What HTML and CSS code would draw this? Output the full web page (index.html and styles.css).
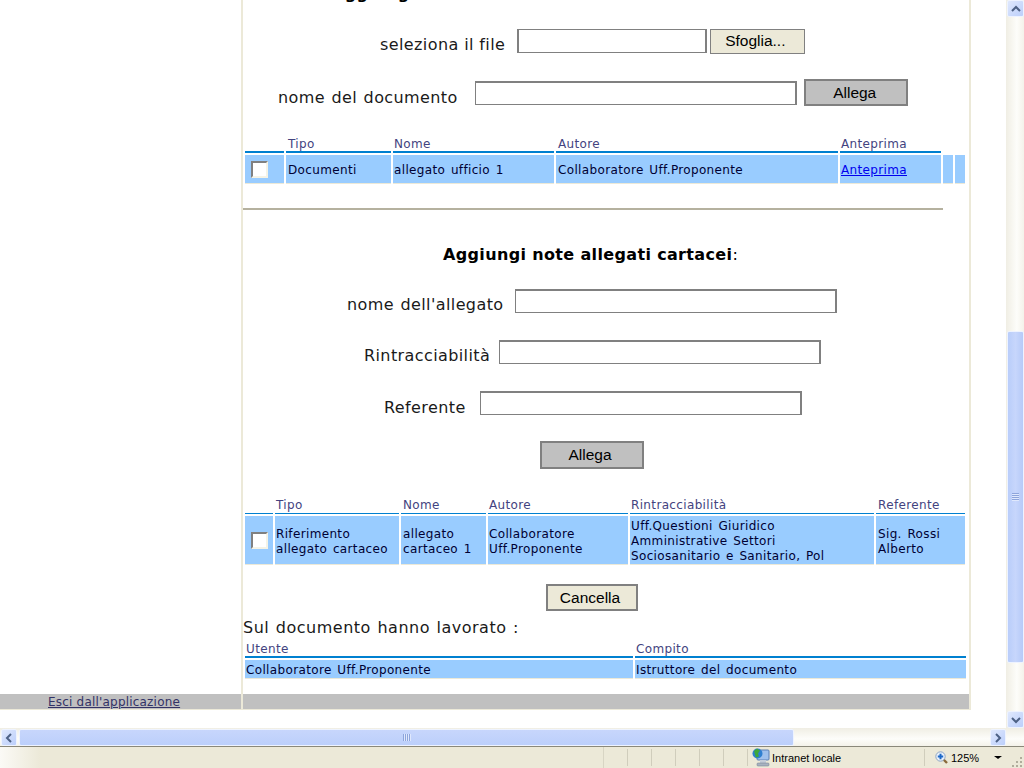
FILE: index.html
```html
<!DOCTYPE html>
<html lang="it">
<head>
  <meta charset="UTF-8" />
  <title>Documento</title>
  <link rel="stylesheet" href="styles.css">
</head>
<body>
  <div class="view">
    <div class="page">
      <div class="columns">
        <div class="sidebar"></div>
        <div class="main">
          <h2 class="title title-cut">Aggiungi documenti:</h2>

          <div class="row row-file">
            <label>seleziona il file</label>
            <input type="text" class="field field-file">
            <button class="btn btn-browse">Sfoglia...</button>
          </div>
          <div class="row row-docname">
            <label>nome del documento</label>
            <input type="text" class="field field-wide">
            <button class="btn btn-attach btn-attach-top">Allega</button>
          </div>

          <table class="grid grid-docs">
            <colgroup>
              <col style="width:39px"><col style="width:105px"><col style="width:161px"><col style="width:282px"><col style="width:101px"><col style="width:10px"><col style="width:10px">
            </colgroup>
            <tr>
              <th></th><th>Tipo</th><th>Nome</th><th>Autore</th><th>Anteprima</th><th class="no-line"></th><th class="no-line"></th>
            </tr>
            <tr>
              <td class="check"><input type="checkbox"></td>
              <td>Documenti</td>
              <td>allegato ufficio 1</td>
              <td>Collaboratore Uff.Proponente</td>
              <td><a href="#">Anteprima</a></td>
              <td></td>
              <td></td>
            </tr>
          </table>

          <hr class="divider">

          <h2 class="title title-notes">Aggiungi note allegati cartacei<span>:</span></h2>

          <div class="row row-note1">
            <label>nome dell'allegato</label>
            <input type="text" class="field field-wide">
          </div>
          <div class="row row-note2">
            <label>Rintracciabilità</label>
            <input type="text" class="field field-wide">
          </div>
          <div class="row row-note3">
            <label>Referente</label>
            <input type="text" class="field field-wide">
          </div>
          <div class="row row-submit">
            <button class="btn btn-attach">Allega</button>
          </div>

          <table class="grid grid-notes">
            <colgroup>
              <col style="width:28px"><col style="width:124px"><col style="width:85px"><col style="width:140px"><col style="width:244px"><col style="width:89px">
            </colgroup>
            <tr>
              <th></th><th>Tipo</th><th>Nome</th><th>Autore</th><th>Rintracciabilità</th><th>Referente</th>
            </tr>
            <tr>
              <td class="check"><input type="checkbox"></td>
              <td>Riferimento allegato cartaceo</td>
              <td>allegato cartaceo 1</td>
              <td>Collaboratore Uff.Proponente</td>
              <td>Uff.Questioni Giuridico<br>Amministrative Settori<br>Sociosanitario e Sanitario, Pol</td>
              <td>Sig. Rossi Alberto</td>
            </tr>
          </table>

          <div class="row row-cancel">
            <button class="btn btn-cancel">Cancella</button>
          </div>

          <p class="worked">Sul documento hanno lavorato :</p>

          <table class="grid grid-users">
            <colgroup>
              <col style="width:388px"><col style="width:331px">
            </colgroup>
            <tr><th>Utente</th><th>Compito</th></tr>
            <tr><td>Collaboratore Uff.Proponente</td><td>Istruttore del documento</td></tr>
          </table>
        </div>
      </div>
      <div class="footer">
        <div class="footer-left"><a href="#">Esci dall'applicazione</a></div>
        <div class="footer-right"></div>
      </div>
    </div>

    <div class="vscroll">
      <div class="sb-btn sb-v">
        <svg width="10" height="8" viewBox="0 0 10 8"><path d="M1 6l4-4 4 4" fill="none" stroke="#4d6185" stroke-width="2"/></svg>
      </div>
      <div class="vtrack"></div>
      <div class="vthumb"><div class="vgrip"></div></div>
      <div class="vtrack-end"></div>
      <div class="sb-btn sb-v">
        <svg width="10" height="8" viewBox="0 0 10 8"><path d="M1 2l4 4 4-4" fill="none" stroke="#4d6185" stroke-width="2"/></svg>
      </div>
    </div>
  </div>

  <div class="hscroll">
    <div class="sb-btn sb-h">
      <svg width="8" height="10" viewBox="0 0 8 10"><path d="M6 1L2 5l4 4" fill="none" stroke="#4d6185" stroke-width="2"/></svg>
    </div>
    <div class="hthumb"><div class="hgrip"></div></div>
    <div class="htrack"></div>
    <div class="sb-btn sb-h">
      <svg width="8" height="10" viewBox="0 0 8 10"><path d="M2 1l4 4-4 4" fill="none" stroke="#4d6185" stroke-width="2"/></svg>
    </div>
  </div>

  <div class="status">
    <div class="st-cell st-main"></div>
    <div class="st-cell st-small"></div>
    <div class="st-cell st-small"></div>
    <div class="st-cell st-small"></div>
    <div class="st-cell st-small"></div>
    <div class="st-cell st-small"></div>
    <div class="st-cell st-small"></div>
    <div class="st-cell st-zone">
      <svg width="18" height="19" viewBox="0 0 18 19">
        <rect x="5" y="2" width="12" height="10" rx="1" fill="#9fc0ec" stroke="#5b7fb5"/>
        <rect x="8" y="12" width="6" height="3" fill="#c4ccd8"/>
        <rect x="5" y="15" width="12" height="3" rx="1" fill="#a8b2c0" stroke="#6d7a8c" stroke-width="0.5"/>
        <circle cx="5.500" cy="5.500" r="5" fill="#2f7fd0"/>
        <path d="M2 3l3-2.400 3 2-2 3 1 3-3 1-1-3z" fill="#3fa83a"/>
      </svg>
      <span>Intranet locale</span>
    </div>
    <div class="st-cell st-zoom">
      <svg width="13" height="13" viewBox="0 0 13 13">
        <path d="M8 8l4 4" stroke="#8a6a3a" stroke-width="2.400"/>
        <circle cx="5.500" cy="5.500" r="4.700" fill="#e8f0fa" stroke="#8fa6c4"/>
        <path d="M5.500 2.800v5.400M2.800 5.500h5.400" stroke="#1c68c8" stroke-width="2"/>
      </svg>
      <span>125%</span>
      <i class="st-arrow"></i>
    </div>
    <svg class="st-grip" width="11" height="11" viewBox="0 0 11 11" fill="#b0ad9c">
      <rect x="8" y="0" width="2" height="2"/>
      <rect x="4" y="4" width="2" height="2"/>
      <rect x="8" y="4" width="2" height="2"/>
      <rect x="0" y="8" width="2" height="2"/>
      <rect x="4" y="8" width="2" height="2"/>
      <rect x="8" y="8" width="2" height="2"/>
    </svg>
  </div>
</body>
</html>
```

FILE: styles.css
```css
* {
  box-sizing: border-box;
}

html, body {
  margin: 0;
  height: 768px;
  overflow: hidden;
  background: #fff;
}

body {
  font-family: "DejaVu Sans", Verdana, sans-serif;
  color: #000033;
}

.view {
  display: flex;
  height: 728px;
}

.page {
  width: 1006px;
  background: #fff;
}

.columns {
  display: flex;
  height: 694px;
}

.sidebar {
  width: 241px;
}

.main {
  width: 730px;
  height: 694px;
  border-left: 2px solid #ece9d8;
  border-right: 2px solid #ece9d8;
  overflow: hidden;
}

/* headings */
.title {
  margin: 0;
  font-size: 16px;
  letter-spacing: 0.35px;
  font-weight: bold;
  color: #000;
}

.title span {
  font-weight: normal;
}

.title-cut {
  margin-top: -15px;
  padding-left: 89px;
  height: 18px;
  line-height: 18px;
}

.title-notes {
  margin-top: 35px;
  padding-left: 200px;
  height: 20px;
  line-height: 20px;
}

/* form rows */
.row {
  display: flex;
  align-items: center;
}

.row label {
  font-size: 16px;
  letter-spacing: 0.4px;
  word-spacing: 1px;
  color: #1a1a1a;
  white-space: nowrap;
}

.row-file {
  margin-top: 26px;
  height: 24px;
  padding-left: 137px;
}

.row-file label {
  margin-right: 12px;
  padding-top: 6px;
  word-spacing: 0;
}

.row-docname {
  margin-top: 26px;
  height: 27px;
  padding-left: 35px;
}

.row-docname label {
  margin-right: 17px;
  padding-top: 10px;
}

.row-note1 {
  margin-top: 24px;
  height: 24px;
  padding-left: 104px;
}

.row-note1 label {
  margin-right: 11px;
  padding-top: 6px;
}

.row-note2 {
  margin-top: 27px;
  height: 24px;
  padding-left: 121px;
}

.row-note2 label {
  margin-right: 9px;
  padding-top: 6px;
}

.row-note3 {
  margin-top: 27px;
  height: 24px;
  padding-left: 141px;
}

.row-note3 label {
  margin-right: 14px;
  padding-top: 8px;
}

.row-submit {
  margin-top: 26px;
  padding-left: 297px;
}

.row-cancel {
  margin-top: 17px;
  padding-left: 303px;
}

.field {
  height: 24px;
  padding: 0 2px;
  background: #fff;
  border: 1px solid #808080;
  border-left-width: 2px;
  border-right-width: 2px;
}

.field-file {
  width: 190px;
  margin-right: 3px;
}

.field-wide {
  width: 322px;
  border-top-width: 2px;
  border-left-width: 1px;
}

.btn {
  font-family: "Liberation Sans", Arial, sans-serif;
  font-size: 15.5px;
  color: #000;
  padding: 0 4px 0 0;
}

.btn-browse {
  width: 95px;
  height: 25px;
  padding-right: 5px;
  background: #ece9d8;
  border: 1px solid #808080;
}

.btn-attach {
  width: 104px;
  height: 28px;
  background: #c0c0c0;
  border: 2px solid #808080;
}

.btn-attach-top {
  margin-left: 7px;
  height: 27px;
  padding-right: 2px;
}

.btn-cancel {
  width: 92px;
  height: 27px;
  background: #ece9d8;
  border: 2px solid #808080;
}

.divider {
  margin: 0;
  width: 700px;
  height: 2px;
  border: 0;
  background: #b5b19f;
}

/* tables */
.grid {
  table-layout: fixed;
  border-collapse: separate;
  border-spacing: 2px;
  font-size: 12px;
  letter-spacing: 0.35px;
  word-spacing: 1.5px;
}

.grid th {
  padding: 0 1px;
  height: 16px;
  font-weight: normal;
  text-align: left;
  color: #434380;
  border-bottom: 2px solid #0080d0;
  white-space: nowrap;
}

.grid th.no-line {
  border-bottom: 0;
}

.grid td {
  padding: 2px 1px 0;
  line-height: 15px;
  background: #99ccff;
  border-bottom: 1px solid #ece9d8;
  overflow: hidden;
}

.grid td.check {
  padding: 0 0 0 6px;
}

.grid a {
  color: #0000ee;
}

.grid-docs {
  width: 724px;
  margin-top: 29px;
}

.grid-docs th:nth-child(even),
.grid-docs td:nth-child(even) {
  padding-left: 2px;
}

.grid-docs td {
  height: 29px;
}

.grid-docs + .divider {
  margin-top: 22px;
}

.grid-notes {
  width: 724px;
  margin-top: 26px;
}

.grid-notes th {
  height: 17px;
  border-bottom-width: 1px;
}

.grid-notes th:nth-child(3),
.grid-notes th:nth-child(6),
.grid-notes td:nth-child(3),
.grid-notes td:nth-child(6) {
  padding-left: 2px;
}

.grid-notes td {
  height: 49px;
  padding-top: 4px;
}

.grid-notes td:nth-child(5) {
  padding-top: 2px;
}

.grid-users {
  width: 725px;
  margin-top: 1px;
}

.grid-users th {
  height: 17px;
}

.grid-users td {
  height: 19px;
}

input[type="checkbox"] {
  appearance: none;
  display: block;
  width: 17px;
  height: 17px;
  margin: 0;
  background: #fff;
  border: 2px solid;
  border-color: #808080 #f5f3e6 #f5f3e6 #808080;
}

.worked {
  margin: 7px 0 0;
  font-size: 16px;
  letter-spacing: 0.5px;
  word-spacing: 1px;
  line-height: 20px;
  color: #1a1a1a;
}

/* bottom band */
.footer {
  display: flex;
  height: 16px;
  width: 971px;
  border-bottom: 1px solid #ece9d8;
  background: #c0c0c0;
  font-size: 12px;
  letter-spacing: 0.2px;
  line-height: 16px;
}

.footer-left {
  width: 241px;
  padding-left: 48px;
}

.footer-left a {
  color: #333366;
}

.footer-right {
  flex: 1;
  border-left: 2px solid #ece9d8;
  border-right: 2px solid #ece9d8;
}

/* xp scrollbars */
.vscroll {
  width: 18px;
  height: 728px;
  padding-left: 1px;
  display: flex;
  flex-direction: column;
  background: linear-gradient(90deg, #f0eee4, #fdfdfa 60%, #f4f2ea);
}

.sb-btn {
  display: flex;
  align-items: center;
  justify-content: center;
  background: linear-gradient(135deg, #dfe8fd, #bccffb);
  border: 1px solid #eef3ff;
  border-radius: 2px;
}

.sb-v {
  width: 17px;
  height: 17px;
}

.sb-h {
  width: 16px;
  height: 17px;
}

.vtrack {
  height: 314px;
}

.vthumb {
  height: 332px;
  width: 17px;
  background: linear-gradient(90deg, #b9cdfa, #c7d6fc 50%, #b6caf8);
  border: 1px solid #eef3ff;
  border-radius: 2px;
  display: flex;
  align-items: center;
  justify-content: center;
}

.vgrip {
  width: 7px;
  height: 8px;
  background: repeating-linear-gradient(180deg, #8ea5dc 0 1px, #dfe8fd 1px 2px);
}

.vtrack-end {
  height: 48px;
}

.hscroll {
  display: flex;
  height: 18px;
  padding: 1px 18px 0 1px;
  background: linear-gradient(180deg, #f0eee4, #fdfdfa 60%, #f4f2ea);
}

.hthumb {
  width: 775px;
  height: 17px;
  margin-left: 2px;
  background: linear-gradient(180deg, #c7d6fc, #bccffb);
  border: 1px solid #eef3ff;
  border-radius: 2px;
  display: flex;
  align-items: center;
  justify-content: center;
}

.hgrip {
  width: 8px;
  height: 7px;
  background: repeating-linear-gradient(90deg, #8ea5dc 0 1px, #dfe8fd 1px 2px);
}

.htrack {
  flex: 1;
}

/* status bar */
.status {
  display: flex;
  align-items: stretch;
  height: 22px;
  background: #ece9d8;
  border-top: 1px solid #8a887a;
  font-family: "Liberation Sans", Arial, sans-serif;
  font-size: 11px;
  color: #000;
}

.st-cell {
  display: flex;
  align-items: center;
  border-right: 1px solid #f8f7f0;
  margin: 2px 0;
}

.st-main {
  width: 604px;
  margin: 0;
  background: linear-gradient(90deg, #fbfaf6, #ece9d8 40px);
  border-right: 1px solid #d8d5c4;
}

.st-small {
  width: 24px;
  border-right-color: #d0cdbc;
}

.st-zone {
  width: 177px;
  padding-left: 4px;
  gap: 2px;
  border-right-color: #d0cdbc;
}

.st-zoom {
  width: 87px;
  padding-left: 10px;
  gap: 3px;
  border-right: 0;
}

.st-arrow {
  width: 0;
  height: 0;
  margin-left: 12px;
  border-left: 4px solid transparent;
  border-right: 4px solid transparent;
  border-top: 3px solid #000;
}

.st-grip {
  margin: 10px 0 0 0;
}
```
